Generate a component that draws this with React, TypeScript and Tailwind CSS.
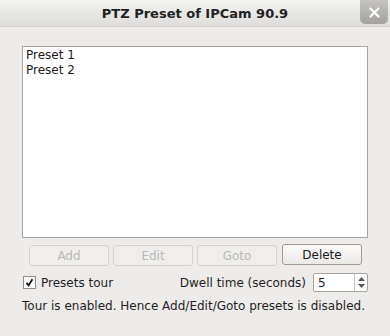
import React from 'react';

const font = { fontFamily: '"DejaVu Sans", "Liberation Sans", sans-serif' };

const Btn = ({ label, disabled }: { label: string; disabled?: boolean }) => (
  <button
    type="button"
    disabled={disabled}
    className={`block w-[80px] h-[21px] rounded-[3px] border text-[12px] leading-none ${
      disabled
        ? 'border-[#d6d3cf] bg-[#efeeec] text-[#b9b7b4]'
        : 'border-[#9d9a96] bg-gradient-to-b from-[#fbfbfa] to-[#ebe9e6] text-[#1a1a1a]'
    }`}
  >
    {label}
  </button>
);

export default function App() {
  return (
    <div className="w-[390px] h-[336px] bg-[#edecea] flex flex-col text-[#1e1e1e] overflow-hidden" style={font}>
      {/* title bar */}
      <div className="relative h-[27px] flex items-center justify-center bg-gradient-to-b from-[#f3f3f2] to-[#dedddb] border-b border-[#d2d0cd]">
        <span className="text-[13px] font-bold text-[#222] pt-[1px]">PTZ Preset of IPCam 90.9</span>
        <div className="absolute top-0 right-[2px] w-[28px] h-[24px] rounded-bl-[5px] rounded-br-[5px] bg-gradient-to-b from-[#c5c4c2] to-[#a3a29f] flex items-center justify-center">
          <svg width="11" height="11" viewBox="0 0 11 11">
            <path d="M1.5 1.5 L9.5 9.5 M9.5 1.5 L1.5 9.5" stroke="#fff" strokeWidth="2.2" strokeLinecap="round" />
          </svg>
        </div>
      </div>

      <div className="flex flex-col px-[22px] pt-[19px]">
        {/* preset list */}
        <div className="h-[192px] w-[346px] bg-white border border-[#a7a4a0] px-[3px] pt-[1px] text-[12px] leading-[15px] text-[#1a1a1a]">
          <div>Preset 1</div>
          <div>Preset 2</div>
        </div>

        {/* buttons */}
        <div className="flex items-start gap-[4px] mt-[7px] pl-[7px]">
          <Btn label="Add" disabled />
          <Btn label="Edit" disabled />
          <Btn label="Goto" disabled />
          <div className="ml-[1px] -mt-[1px]">
            <Btn label="Delete" />
          </div>
        </div>

        {/* tour row */}
        <div className="flex items-center mt-[7px] h-[19px] text-[12px]">
          <div className="w-[13px] h-[13px] ml-[1px] bg-white border border-[#8f8c88] flex items-center justify-center">
            <svg width="9" height="9" viewBox="0 0 9 9">
              <path d="M1.5 4.8 L3.6 7.4 L7.4 1.2" fill="none" stroke="#111" strokeWidth="1.8" />
            </svg>
          </div>
          <span className="ml-[5px]">Presets tour</span>
          <span className="ml-auto mr-[7px]">Dwell time (seconds)</span>
          <div className="w-[55px] h-[19px] bg-white border border-[#a7a4a0] rounded-[2px] flex items-center">
            <span className="flex-1 pl-[4px]">5</span>
            <div className="w-[13px] h-full border-l border-[#c8c5c1] flex flex-col items-center justify-center gap-[3px]">
              <svg width="7" height="4" viewBox="0 0 7 4"><path d="M0 4 L3.5 0 L7 4 Z" fill="#555" /></svg>
              <svg width="7" height="4" viewBox="0 0 7 4"><path d="M0 0 L3.5 4 L7 0 Z" fill="#555" /></svg>
            </div>
          </div>
        </div>

        {/* status */}
        <div className="mt-[7px] text-[12px] leading-[15px] whitespace-nowrap">
          Tour is enabled. Hence Add/Edit/Goto presets is disabled.
        </div>
      </div>
    </div>
  );
}
